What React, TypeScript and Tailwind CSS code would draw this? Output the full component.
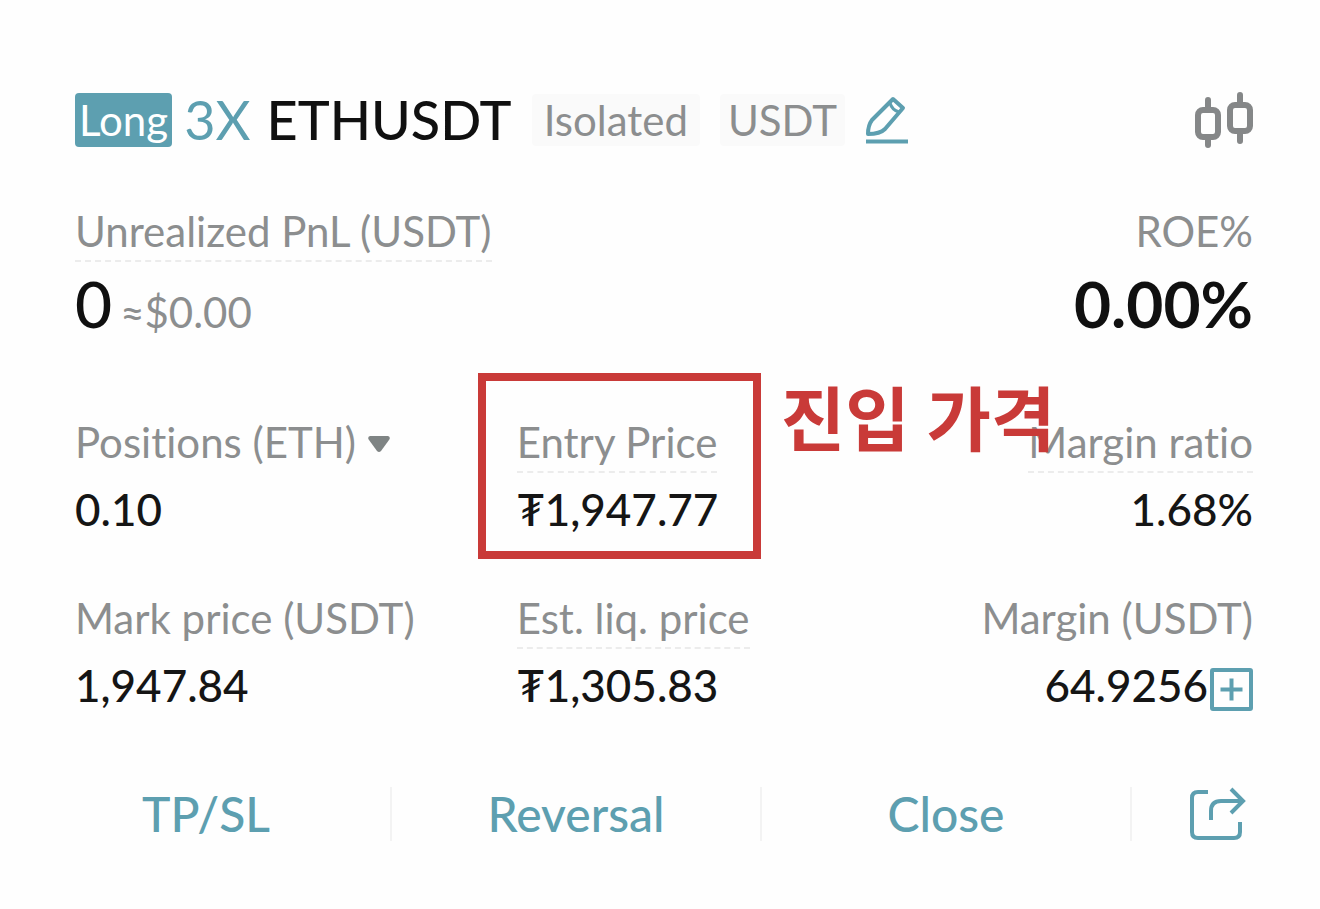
import { useState } from "react";
import clsx from "clsx";

type LabelProps = {
  text: string;
  dashed?: boolean;
};

const Label: React.FC<LabelProps> = ({ text, dashed }) => {
  return (
    <span
      className={clsx(
        "inline-block border-b-2 border-dashed pb-[3px] text-[42px] leading-[52px] text-[#8c8e8f] whitespace-nowrap",
        dashed ? "border-[#ececec]" : "border-transparent",
      )}
    >
      {text}
    </span>
  );
};

const Value: React.FC<{ children: React.ReactNode }> = ({ children }) => {
  return (
    <dd className="mt-2 text-[44px] leading-[56px] font-medium text-[#151515] whitespace-nowrap">
      {children}
    </dd>
  );
};

const PencilIcon = () => (
  <svg width="44" height="50" viewBox="0 0 44 50" fill="none" stroke="currentColor" strokeWidth="4">
    <path d="M3 39 C3 32 4 29 7 25 L28 4 L38 13 L20 34 C16 38 11 39 3 39 Z" strokeLinejoin="round" />
    <path d="M25 8 Q27 15 34 17" strokeWidth="3" />
    <path d="M1 46.500 H43" />
  </svg>
);

const CandlesIcon = () => (
  <svg width="58" height="56" viewBox="0 0 58 56" fill="none" stroke="currentColor" strokeWidth="6">
    <rect x="3" y="18" width="20" height="27" rx="5" />
    <path d="M13 8 V18 M13 45 V53" strokeLinecap="round" />
    <rect x="35" y="13" width="20" height="26" rx="5" />
    <path d="M45 3 V13 M45 39 V49" strokeLinecap="round" />
  </svg>
);

const PlusBoxIcon = () => (
  <svg width="43" height="43" viewBox="0 0 43 43" fill="none" stroke="currentColor" strokeWidth="4">
    <rect x="2" y="2" width="39" height="39" rx="1" />
    <path d="M10.500 21.500 H32.500 M21.500 10.500 V32.500" />
  </svg>
);

const ShareIcon = () => (
  <svg width="58" height="54" viewBox="0 0 58 54" fill="none" stroke="currentColor" strokeWidth="4">
    <path d="M19 5 H9 Q3 5 3 11 V45 Q3 51 9 51 H45 Q51 51 51 45 V35" />
    <path d="M22 33 V24 Q22 14 32 14 H54" />
    <path d="M42 2 L54 14 L42 26" />
  </svg>
);

const actions = ["TP/SL", "Reversal", "Close"];

const App: React.FC = () => {
  const [unit, setUnit] = useState<string>("ETH");

  const toggleUnit = () => {
    setUnit(unit === "ETH" ? "USDT" : "ETH");
  };

  return (
    <main className="min-h-screen overflow-x-hidden bg-[#fefefe] pt-[93px] pb-16 font-[Lato,'Noto_Sans','Noto_Sans_CJK_KR',sans-serif] [font-variant-ligatures:none]">
      <section className="pl-[75px] pr-[67px]">
        <header className="flex h-[54px] items-center">
          <span className="flex h-full items-center rounded-[4px] bg-[#5d9fb0] px-1 text-[42px] text-white">
            Long
          </span>
          <span className="ml-3 text-[54px] leading-[54px] text-[#5d9fb0]">3X</span>
          <h1 className="ml-4 text-[54px] leading-[54px] font-medium text-[#101010]">ETHUSDT</h1>
          <span className="ml-5 rounded-[4px] bg-[#fafafa] px-3 text-[42px] leading-[52px] text-[#8c8e8f]">
            Isolated
          </span>
          <span className="ml-5 rounded-[4px] bg-[#fafafa] px-2 text-[42px] leading-[52px] text-[#8c8e8f]">
            USDT
          </span>
          <button type="button" aria-label="Edit" className="ml-5 text-[#5d9fb0]">
            <PencilIcon />
          </button>
          <button type="button" aria-label="Chart" className="ml-auto text-[#858788]">
            <CandlesIcon />
          </button>
        </header>

        <dl className="mt-[58px] flex justify-between">
          <div>
            <dt className="flex"><Label text="Unrealized PnL (USDT)" dashed /></dt>
            <dd className="mt-[10px] flex items-baseline gap-2 text-[64px] leading-[64px] font-medium text-[#101010]">
              0
              <span className="text-[42px] leading-[52px] font-normal text-[#8c8e8f]">≈$0.00</span>
            </dd>
          </div>
          <div className="flex flex-col items-end">
            <dt className="flex"><Label text="ROE%" /></dt>
            <dd className="mt-[10px] text-[64px] leading-[64px] font-bold text-[#101010]">0.00%</dd>
          </div>
        </dl>

        <dl className="mt-[78px] grid grid-cols-[3fr_3fr_2fr] gap-y-[55px]">
          <div>
            <dt className="flex">
              <button type="button" onClick={toggleUnit} className="flex items-center gap-3">
                <Label text={`Positions (${unit})`} />
                <svg width="22" height="17" viewBox="0 0 22 17" fill="#7f8484">
                  <path d="M2 0 H20 Q23 1 21 4 L13 15 Q11 17 9 15 L1 4 Q-1 1 2 0 Z" />
                </svg>
              </button>
            </dt>
            <Value>0.10</Value>
          </div>
          <div className="relative">
            <dt className="flex"><Label text="Entry Price" dashed /></dt>
            <Value>₮1,947.77</Value>
            {/* callout over the entry price */}
            <div className="pointer-events-none absolute -left-[39px] -top-[43px] h-[186px] w-[283px] border-8 border-[#c93a38]" />
            <p className="pointer-events-none absolute left-[264px] -top-[43px] z-10 text-[70px] leading-[92px] font-bold text-[#c93a38] whitespace-nowrap">
              진입 가격
            </p>
          </div>
          <div className="flex flex-col items-end">
            <dt className="flex"><Label text="Margin ratio" dashed /></dt>
            <Value>1.68%</Value>
          </div>
          <div>
            <dt className="flex"><Label text="Mark price (USDT)" /></dt>
            <Value>1,947.84</Value>
          </div>
          <div>
            <dt className="flex"><Label text="Est. liq. price" dashed /></dt>
            <Value>₮1,305.83</Value>
          </div>
          <div className="flex flex-col items-end">
            <dt className="flex"><Label text="Margin (USDT)" /></dt>
            <Value>
              <span className="flex items-center gap-[2px]">
                64.9256
                <button type="button" aria-label="Add margin" className="mt-2 text-[#5d9fb0]">
                  <PlusBoxIcon />
                </button>
              </span>
            </Value>
          </div>
        </dl>
      </section>

      <footer className="mt-[74px] flex h-[54px] pl-[22px] pr-4 text-[#5d9fb0]">
        {actions.map((action) => (
          <button
            key={action}
            type="button"
            className="flex-1 border-r-2 border-[#f3f3f3] text-[48px] leading-[54px] font-medium"
          >
            {action}
          </button>
        ))}
        <button type="button" aria-label="Share" className="flex w-[172px] items-center justify-center">
          <ShareIcon />
        </button>
      </footer>
    </main>
  );
};

export default App;
